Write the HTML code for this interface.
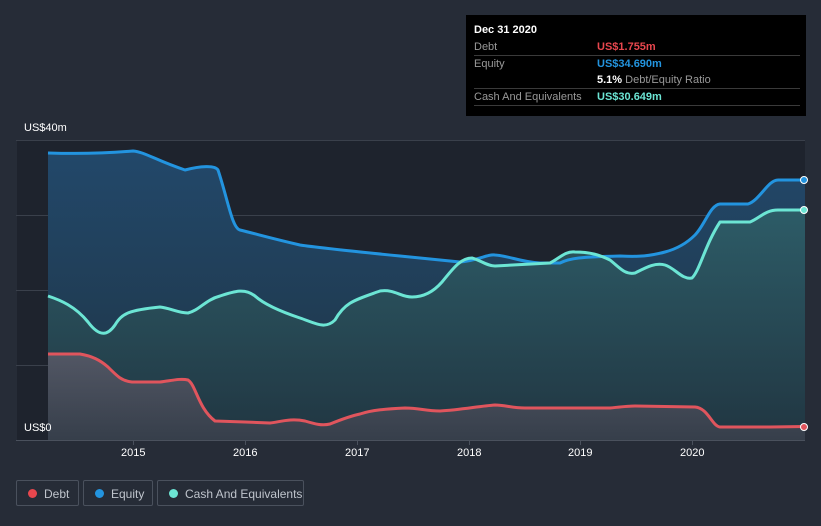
<!DOCTYPE html>
<html><head><meta charset="utf-8"><style>
body{margin:0;width:821px;height:526px;background:#262c37;font-family:"Liberation Sans",sans-serif;overflow:hidden;position:relative}
.tt{position:absolute;left:466px;top:15px;width:340px;height:101px;background:#000;color:#fff;font-size:11px}
.tt .r{position:absolute;left:8px;right:6px;height:16px;border-bottom:1px solid #3a3a3a;line-height:16px}
.tt .l{color:#999}
.tt .v{position:absolute;left:123px;top:0;font-weight:bold}
.lg{position:absolute;top:480px;height:26px;border:1px solid #4a515d;border-radius:2px;color:#bfc4cc;font-size:12px;line-height:26px;box-sizing:border-box}
.lg i{position:absolute;left:11px;top:8px;width:9px;height:9px;border-radius:50%}
.lg span{position:absolute;left:27px}
.ax{position:absolute;color:#fff;font-size:11px}
</style></head><body>
<svg width="821" height="526" style="position:absolute;left:0;top:0">
<defs>
<linearGradient id="gE" x1="0" y1="0" x2="0" y2="1"><stop offset="0" stop-color="#22486a"/><stop offset="1" stop-color="#1f3444"/></linearGradient>
<linearGradient id="gC" x1="0" y1="0" x2="0" y2="1"><stop offset="0" stop-color="#2f6068"/><stop offset="1" stop-color="#213641"/></linearGradient>
<linearGradient id="gD" x1="0" y1="0" x2="0" y2="1"><stop offset="0" stop-color="#5a5a68"/><stop offset="1" stop-color="#3a404c"/></linearGradient>
</defs>
<rect x="17" y="140" width="788" height="300" fill="#1e232d"/>
<g stroke="#3a404b" stroke-width="1">
<line x1="16" y1="140.5" x2="805" y2="140.5"/><line x1="16" y1="215.5" x2="805" y2="215.5"/><line x1="16" y1="290.5" x2="805" y2="290.5"/><line x1="16" y1="365.5" x2="805" y2="365.5"/>
</g>
<path fill="url(#gE)" d="M48,153 C80,154 110,153 133,151 C145,152 155,160 185,170 C200,166 215,165 218,170 C228,200 232,228 240,230 C260,235 270,238 300,245 C320,248 350,251 400,256 L460,262 C480,260 487,254 495,255 C510,256 520,262 540,263 L560,263 C570,258 580,257 620,256 C640,257 650,256 665,252 C680,248 690,240 695,235 C705,225 710,205 720,204 L748,204 C760,200 768,180 778,180 L805,180 L805,440 L48,440Z"/>
<path fill="url(#gC)" d="M48,296 C60,300 75,306 88,322 C100,338 108,335 115,325 C122,313 130,310 160,307 C170,308 178,313 188,313 C200,310 205,300 220,296 C235,291 245,288 255,296 C265,305 285,313 300,318 C315,323 325,330 335,320 C345,302 355,300 380,291 C395,289 400,297 412,297 C425,297 435,290 442,282 C452,270 460,258 472,258 C480,260 487,266 495,266 L550,263 C560,258 565,251 575,252 C590,252 600,255 610,260 C620,268 625,275 635,273 C645,268 655,262 665,265 C675,268 682,280 692,278 C700,270 705,245 720,222 L750,222 C760,218 765,210 778,210 L805,210 L805,440 L48,440Z" opacity="0.85"/>
<path fill="url(#gD)" d="M48,354 L80,354 C92,356 100,360 108,367 C118,377 122,381 132,382 L160,382 C170,381 180,378 188,380 C196,385 198,408 215,421 L245,422 L270,423 C280,422 290,418 305,421 C315,424 322,426 330,424 C340,420 350,416 360,414 C372,410 385,409 405,408 C420,408 425,411 440,411 C460,410 480,406 495,405 C505,405 512,408 525,408 L610,408 C620,407 628,406 635,406 L695,407 C708,408 712,426 720,427 L770,427 L805,426.5 L805,440 L48,440Z" opacity="0.85"/>
<g fill="none" stroke-width="3" stroke-linejoin="round">
<path stroke="#2394df" d="M48,153 C80,154 110,153 133,151 C145,152 155,160 185,170 C200,166 215,165 218,170 C228,200 232,228 240,230 C260,235 270,238 300,245 C320,248 350,251 400,256 L460,262 C480,260 487,254 495,255 C510,256 520,262 540,263 L560,263 C570,258 580,257 620,256 C640,257 650,256 665,252 C680,248 690,240 695,235 C705,225 710,205 720,204 L748,204 C760,200 768,180 778,180 L805,180"/>
<path stroke="#6ce5d4" d="M48,296 C60,300 75,306 88,322 C100,338 108,335 115,325 C122,313 130,310 160,307 C170,308 178,313 188,313 C200,310 205,300 220,296 C235,291 245,288 255,296 C265,305 285,313 300,318 C315,323 325,330 335,320 C345,302 355,300 380,291 C395,289 400,297 412,297 C425,297 435,290 442,282 C452,270 460,258 472,258 C480,260 487,266 495,266 L550,263 C560,258 565,251 575,252 C590,252 600,255 610,260 C620,268 625,275 635,273 C645,268 655,262 665,265 C675,268 682,280 692,278 C700,270 705,245 720,222 L750,222 C760,218 765,210 778,210 L805,210"/>
<path stroke="#e0555d" d="M48,354 L80,354 C92,356 100,360 108,367 C118,377 122,381 132,382 L160,382 C170,381 180,378 188,380 C196,385 198,408 215,421 L245,422 L270,423 C280,422 290,418 305,421 C315,424 322,426 330,424 C340,420 350,416 360,414 C372,410 385,409 405,408 C420,408 425,411 440,411 C460,410 480,406 495,405 C505,405 512,408 525,408 L610,408 C620,407 628,406 635,406 L695,407 C708,408 712,426 720,427 L770,427 L805,426.5"/>
</g>
<circle cx="804" cy="180" r="3.5" fill="#2394df" stroke="#fff" stroke-width="1"/>
<circle cx="804" cy="210" r="3.5" fill="#6ce5d4" stroke="#fff" stroke-width="1"/>
<circle cx="804" cy="427" r="3.5" fill="#e0555d" stroke="#fff" stroke-width="1"/>
<line x1="16" y1="440.5" x2="805" y2="440.5" stroke="#4a515d"/>
<g stroke="#4a515d"><line x1="133.5" y1="440" x2="133.5" y2="445"/><line x1="245.5" y1="440" x2="245.5" y2="445"/><line x1="357.5" y1="440" x2="357.5" y2="445"/><line x1="469.5" y1="440" x2="469.5" y2="445"/><line x1="580.5" y1="440" x2="580.5" y2="445"/><line x1="692.5" y1="440" x2="692.5" y2="445"/></g>
</svg>
<div class="ax" style="left:24px;top:122px">US$40m</div>
<div class="ax" style="left:24px;top:422px">US$0</div>
<div class="ax" style="left:121px;top:447px">2015</div>
<div class="ax" style="left:233px;top:447px">2016</div>
<div class="ax" style="left:345px;top:447px">2017</div>
<div class="ax" style="left:457px;top:447px">2018</div>
<div class="ax" style="left:568px;top:447px">2019</div>
<div class="ax" style="left:680px;top:447px">2020</div>
<div class="tt">
<div style="position:absolute;left:8px;top:9px;font-weight:bold">Dec 31 2020</div>
<div class="r" style="top:24px"><span class="l">Debt</span><span class="v" style="color:#e8474e">US$1.755m</span></div>
<div class="r" style="top:41px;border:none"><span class="l">Equity</span><span class="v" style="color:#2394df">US$34.690m</span></div>
<div class="r" style="top:57px"><span class="v" style="color:#fff">5.1% <span style="color:#999;font-weight:normal">Debt/Equity Ratio</span></span></div>
<div class="r" style="top:74px"><span class="l">Cash And Equivalents</span><span class="v" style="color:#6ce5d4">US$30.649m</span></div>
</div>
<div class="lg" style="left:16px;width:63px"><i style="background:#e8474e"></i><span>Debt</span></div>
<div class="lg" style="left:83px;width:70px"><i style="background:#2394df"></i><span>Equity</span></div>
<div class="lg" style="left:157px;width:147px"><i style="background:#6ce5d4"></i><span>Cash And Equivalents</span></div>
</body></html>
